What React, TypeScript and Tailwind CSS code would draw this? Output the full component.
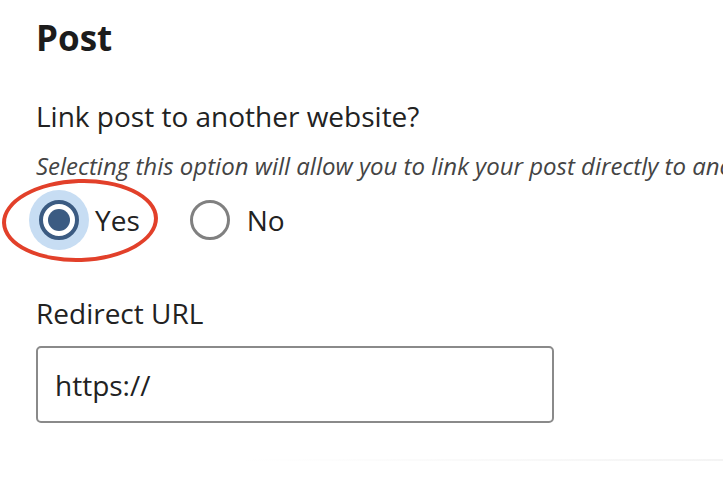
import React from 'react';

const font = { fontFamily: '"Open Sans", "Noto Sans", sans-serif' };

const App: React.FC = () => {
  return (
    <div className="w-[723px] h-[482px] bg-white overflow-hidden text-[#222]" style={font}>
      <div className="pl-[36px] pt-[14px]">
        <h1 className="text-[35px] font-bold leading-[48px] text-[#1c1c1c]">Post</h1>

        <p className="mt-[37px] text-[28px] leading-[34px]">Link post to another website?</p>
        <p className="mt-[19px] text-[24px] leading-[28px] italic text-[#444] whitespace-nowrap">
          Selecting this option will allow you to link your post directly to another website.
        </p>

        <div className="mt-[10px] flex items-center gap-[16px] h-[60px] -ml-[7px] relative">
          {/* red annotation ring */}
          <div className="absolute left-[-27px] top-[-11px] w-[156px] h-[83px] rounded-[50%] border-[4px] border-[#e2402a] rotate-[-2deg]" />
          <label className="flex items-center gap-[6px]">
            <span className="w-[60px] h-[60px] rounded-full bg-[#c7ddf3] flex items-center justify-center">
              <span className="w-[40px] h-[40px] rounded-full border-[4px] border-[#3b5b82] bg-white flex items-center justify-center">
                <span className="w-[22px] h-[22px] rounded-full bg-[#3b5b82]" />
              </span>
            </span>
            <span className="text-[28px] leading-[36px]">Yes</span>
          </label>
          <label className="flex items-center gap-[17px] ml-[34px]">
            <span className="w-[40px] h-[40px] rounded-full border-[3px] border-[#808080] bg-white" />
            <span className="text-[28px] leading-[36px]">No</span>
          </label>
        </div>

        <p className="mt-[46px] text-[28px] leading-[34px]">Redirect URL</p>
        <div className="mt-[16px] w-[518px] h-[77px] border-2 border-[#8a8a8a] rounded-[5px] flex items-center px-[17px]">
          <span className="text-[28px]">https://</span>
        </div>
      </div>
      <div className="mt-[36px] ml-[240px] h-[2px] bg-gradient-to-r from-white to-[#f4f4f4]" />
    </div>
  );
};

export default App;
